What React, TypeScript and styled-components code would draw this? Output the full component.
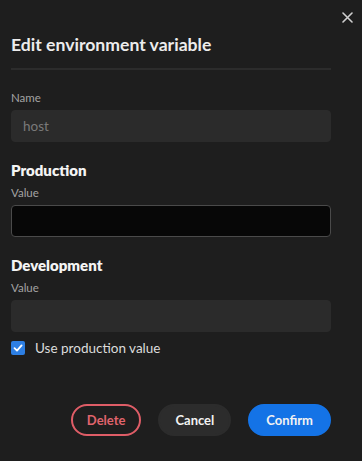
import React from "react";
import styled, { createGlobalStyle } from "styled-components";

const Global = createGlobalStyle`
  html, body { margin: 0; padding: 0; background: #1e1e1e; }
  body { font-family: "Source Sans Pro", Lato, "Noto Sans", sans-serif; }
  * { box-sizing: border-box; }
`;

const Dialog = styled.div`
  position: relative;
  width: 362px;
  height: 461px;
  background: #1e1e1e;
  padding: 33px 31px 0 11px;
  display: flex;
  flex-direction: column;
`;

const Close = styled.button`
  position: absolute;
  top: 11px;
  right: 9px;
  width: 12px;
  height: 12px;
  padding: 0;
  border: none;
  background: transparent;
  display: flex;
  align-items: center;
  justify-content: center;
`;

const Title = styled.h1`
  margin: 0;
  font-size: 17.6px;
  line-height: 24px;
  font-weight: 700;
  color: #ececec;
`;

const Divider = styled.div`
  height: 2px;
  background: #2c2c2c;
  margin: 11px 0 21px;
`;

const Label = styled.label`
  display: block;
  font-size: 11.5px;
  line-height: 14px;
  color: #a3a3a3;
  margin-bottom: 5px;
`;

const Section = styled.h2`
  margin: 0 0 7px;
  font-size: 15px;
  line-height: 18px;
  font-weight: 800;
  color: #f4f4f4;
`;

const Input = styled.input<{ $dark?: boolean; $mb: number }>`
  display: block;
  width: 100%;
  height: 32px;
  border-radius: 4px;
  border: 1px solid ${(p) => (p.$dark ? "#4a4a4a" : "#2b2b2b")};
  background: ${(p) => (p.$dark ? "#070707" : "#2b2b2b")};
  color: #7a7a7a;
  font-family: inherit;
  font-size: 13.5px;
  padding: 0 11px;
  outline: none;
  margin-bottom: ${(p) => p.$mb}px;
`;

const CheckRow = styled.label`
  display: flex;
  align-items: center;
  gap: 10px;
  font-size: 13.5px;
  line-height: 14px;
  color: #dcdcdc;
`;

const Box = styled.span`
  width: 14px;
  height: 14px;
  border-radius: 2px;
  background: #2d7fe4;
  display: flex;
  align-items: center;
  justify-content: center;
`;

const Actions = styled.div`
  display: flex;
  justify-content: flex-end;
  gap: 17px;
  margin-top: 49px;
`;

const Btn = styled.button<{ $variant: "danger" | "secondary" | "primary" }>`
  height: 32px;
  border-radius: 16px;
  font-family: inherit;
  font-size: 13px;
  font-weight: 700;
  padding: 0 ${(p) => (p.$variant === "danger" ? "14px" : p.$variant === "primary" ? "16px" : "15px")};
  border: 2px solid
    ${(p) =>
      p.$variant === "danger" ? "#df5d67" : p.$variant === "primary" ? "#1473e6" : "#2c2c2c"};
  background: ${(p) =>
    p.$variant === "danger" ? "transparent" : p.$variant === "primary" ? "#1473e6" : "#2c2c2c"};
  color: ${(p) => (p.$variant === "danger" ? "#e0646d" : "#f2f2f2")};
`;

export default function App() {
  return (
    <>
      <Global />
      <Dialog>
        <Close aria-label="Close">
          <svg width="11" height="11" viewBox="0 0 11 11">
            <path d="M1 1L10 10M10 1L1 10" stroke="#cfcfcf" strokeWidth="1.6" strokeLinecap="round" />
          </svg>
        </Close>
        <Title>Edit environment variable</Title>
        <Divider />
        <Label>Name</Label>
        <Input defaultValue="host" disabled $mb={19} />
        <Section>Production</Section>
        <Label>Value</Label>
        <Input $dark $mb={19} />
        <Section>Development</Section>
        <Label>Value</Label>
        <Input disabled $mb={9} />
        <CheckRow>
          <Box>
            <svg width="10" height="10" viewBox="0 0 10 10">
              <path d="M1.5 5.2L4 7.6L8.6 2.4" stroke="#fff" strokeWidth="1.8" fill="none" strokeLinecap="round" strokeLinejoin="round" />
            </svg>
          </Box>
          Use production value
        </CheckRow>
        <Actions>
          <Btn $variant="danger">Delete</Btn>
          <Btn $variant="secondary">Cancel</Btn>
          <Btn $variant="primary">Confirm</Btn>
        </Actions>
      </Dialog>
    </>
  );
}
